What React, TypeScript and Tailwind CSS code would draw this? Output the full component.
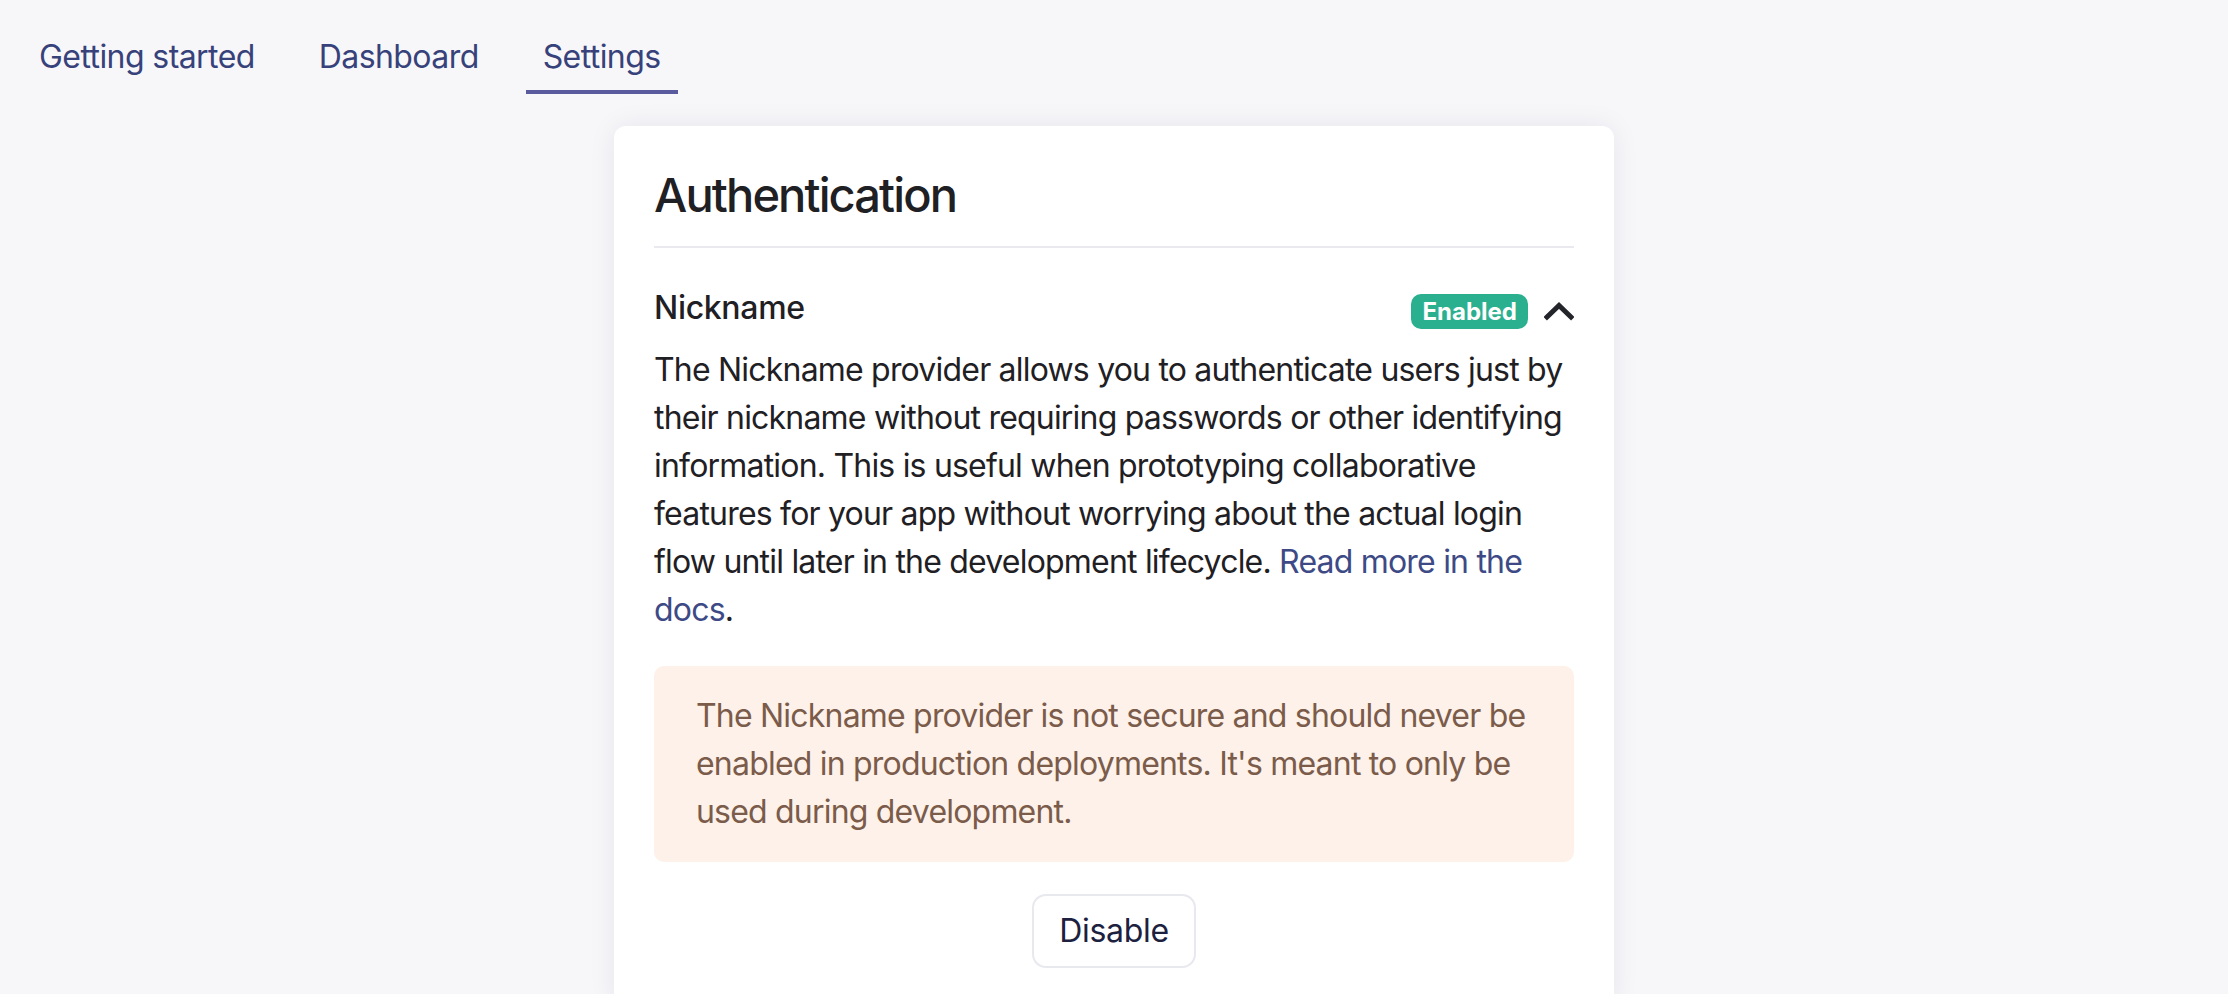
import { useState } from "react";

const tabs = ["Getting started", "Dashboard", "Settings"];

function ChevronUp() {
  return (
    <svg width="30" height="20" viewBox="0 0 30 20" fill="none">
      <polyline
        points="3,16 15,4.5 27,16"
        stroke="#23252b"
        strokeWidth="5"
        strokeLinecap="square"
        strokeLinejoin="miter"
      />
    </svg>
  );
}

export default function App() {
  const [active, setActive] = useState("Settings");
  const [open, setOpen] = useState(true);

  return (
    <div
      className="min-h-[994px] bg-[#f7f7fa] text-[#1f2024]"
      style={{ fontFamily: "Inter, 'Noto Sans', sans-serif" }}
    >
      <nav className="flex gap-[30px] pl-[22px]">
        {tabs.map((tab) => (
          <button
            key={tab}
            type="button"
            onClick={() => setActive(tab)}
            className="flex flex-col items-stretch pt-[33px] cursor-pointer"
          >
            <span className="px-[17px] text-[32px] leading-[48px] tracking-[-0.018em] text-[#37427a]">
              {tab}
            </span>
            <span
              className={`mt-[9px] h-1 ${active === tab ? "bg-[#5a5b9f]" : "bg-transparent"}`}
            />
          </button>
        ))}
      </nav>

      <main className="flex justify-center pt-8">
        <section className="w-[1000px] rounded-[12px] bg-white px-10 pt-10 pb-10 shadow-[0_0_28px_rgba(30,30,60,0.07)]">
          <h1 className="border-b-2 border-[#e9e9ef] pb-[22px] text-[47px] leading-[58px] font-medium tracking-[-0.04em]">
            Authentication
          </h1>

          <div className="mt-9 flex h-12 items-center justify-between">
            <h2 className="text-[32px] leading-[48px] font-medium tracking-[-0.01em]">Nickname</h2>
            <div className="flex items-center gap-[16px] pt-[6px]">
              <span className="rounded-[10px] bg-[#2bb08f] px-[11px] text-[24px] leading-[35px] font-bold text-white">
                Enabled
              </span>
              <button type="button" onClick={() => setOpen(!open)} className="cursor-pointer">
                <ChevronUp />
              </button>
            </div>
          </div>

          {open && (
            <>
              <p className="mt-[14px] text-[32px] leading-[48px] tracking-[-0.025em]">
                The Nickname provider allows you to authenticate users just by their
                nickname without requiring passwords or other identifying information.
                This is useful when prototyping collaborative features for your app
                without worrying about the actual login flow until later in the
                development lifecycle.{" "}
                <a href="#" className="text-[#3d4a86]">
                  Read more in the docs
                </a>
                .
              </p>

              <div className="mt-8 rounded-[10px] bg-[#fdf1e9] px-[42px] py-[26px] text-[32px] leading-[48px] tracking-[-0.025em] text-[#7b5b4a]">
                The Nickname provider is not secure and should never be enabled in
                production deployments. It's meant to only be used during development.
              </div>

              <div className="mt-8 flex justify-center">
                <button
                  type="button"
                  className="rounded-[14px] border-2 border-[#e8e8ef] bg-white px-[25px] py-[11px] text-[32px] leading-[48px] tracking-[-0.01em] text-[#1c2140]"
                >
                  Disable
                </button>
              </div>
            </>
          )}
        </section>
      </main>
    </div>
  );
}
